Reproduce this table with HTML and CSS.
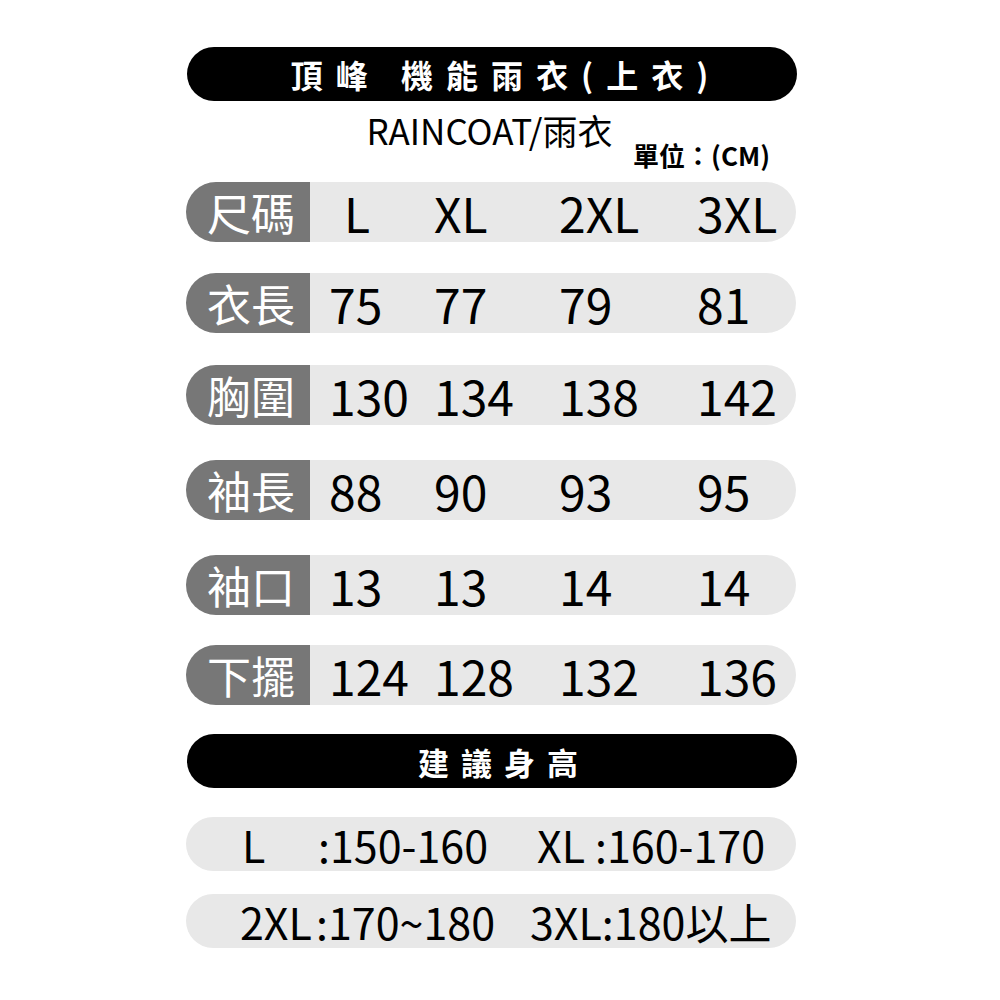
FILE: index.html
```html
<!DOCTYPE html>
<html lang="zh-Hant">
<head>
<meta charset="utf-8">
<title>頂峰 機能雨衣</title>
<link rel="stylesheet" href="styles.css">
</head>
<body>
<div class="page">
  <div class="title-bar">頂峰 機能雨衣(上衣)</div>
  <div class="subtitle">RAINCOAT/雨衣</div>
  <div class="unit">單位：(CM)</div>

  <div class="table">
    <div class="row">
      <div class="label">尺碼</div>
      <div class="cells"><span class="first-l">L</span><span>XL</span><span>2XL</span><span>3XL</span></div>
    </div>
    <div class="row">
      <div class="label">衣長</div>
      <div class="cells"><span>75</span><span>77</span><span>79</span><span>81</span></div>
    </div>
    <div class="row">
      <div class="label">胸圍</div>
      <div class="cells"><span>130</span><span>134</span><span>138</span><span>142</span></div>
    </div>
    <div class="row">
      <div class="label">袖長</div>
      <div class="cells"><span>88</span><span>90</span><span>93</span><span>95</span></div>
    </div>
    <div class="row">
      <div class="label">袖口</div>
      <div class="cells"><span>13</span><span>13</span><span>14</span><span>14</span></div>
    </div>
    <div class="row">
      <div class="label">下擺</div>
      <div class="cells"><span>124</span><span>128</span><span>132</span><span>136</span></div>
    </div>
  </div>

  <div class="title-bar second">建議身高</div>

  <div class="height-row hr1"><span>L</span><span>:150-160</span><span>XL</span><span>:160-170</span></div>
  <div class="height-row hr2"><span>2XL</span><span>:170~180</span><span>3XL:180以上</span></div>
</div>
</body>
</html>
```

FILE: styles.css
```css
html, body {
  margin: 0;
  padding: 0;
  background: #ffffff;
}

body {
  font-family: "Noto Sans CJK TC", "Noto Sans", sans-serif;
  color: #000000;
}

.page {
  width: 611px;
  margin-left: 186px;
  padding-top: 47px;
}

.title-bar {
  height: 54px;
  margin-left: 1px;
  border-radius: 27px;
  background: #000000;
  color: #ffffff;
  display: flex;
  align-items: center;
  justify-content: center;
  font-size: 32px;
  font-weight: 700;
  letter-spacing: 13px;
  padding-left: 28px;
  box-sizing: border-box;
  white-space: pre;
}

.subtitle {
  margin-top: 9px;
  font-size: 35px;
  line-height: 40px;
  text-align: center;
  padding-right: 4px;
}

.unit {
  margin-top: -10px;
  font-size: 26px;
  line-height: 30px;
  font-weight: 700;
  text-align: right;
  padding-right: 27px;
}

.table {
  margin-top: 12px;
  display: flex;
  flex-direction: column;
}

.row {
  display: flex;
  height: 60px;
  width: 610px;
}

.row + .row {
  margin-top: 31px;
}

.row:nth-child(3) {
  margin-top: 32px;
}

.row:nth-child(4),
.row:nth-child(5) {
  margin-top: 35px;
}

.row:nth-child(6) {
  margin-top: 30px;
}

.label {
  width: 124px;
  flex: none;
  background: #777777;
  border-radius: 30px 0 0 30px;
  color: #ffffff;
  font-size: 44px;
  font-weight: 400;
  line-height: 60px;
  text-align: right;
  padding-right: 15px;
  box-sizing: border-box;
}

.cells {
  flex: 1;
  background: #e8e8e8;
  border-radius: 0 30px 30px 0;
  display: grid;
  grid-template-columns: 105px 125px 138px auto;
  align-items: center;
  padding-left: 19px;
  font-size: 48px;
  font-weight: 400;
  line-height: 60px;
}

.cells .first-l {
  padding-left: 15px;
}

.title-bar.second {
  margin-top: 29px;
  font-size: 31px;
  letter-spacing: 12px;
  padding-left: 24px;
}

.height-row {
  width: 610px;
  height: 54px;
  border-radius: 27px;
  background: #e8e8e8;
  display: grid;
  align-items: center;
  font-size: 43px;
  line-height: 54px;
  white-space: pre;
}

.hr1 {
  margin-top: 29px;
  grid-template-columns: 56px 76px 219px 58px auto;
}

.hr1 span:first-child {
  grid-column: 2;
}

.hr2 {
  margin-top: 23px;
  grid-template-columns: 54px 76px 214px auto;
}

.hr2 span:first-child {
  grid-column: 2;
}
```
